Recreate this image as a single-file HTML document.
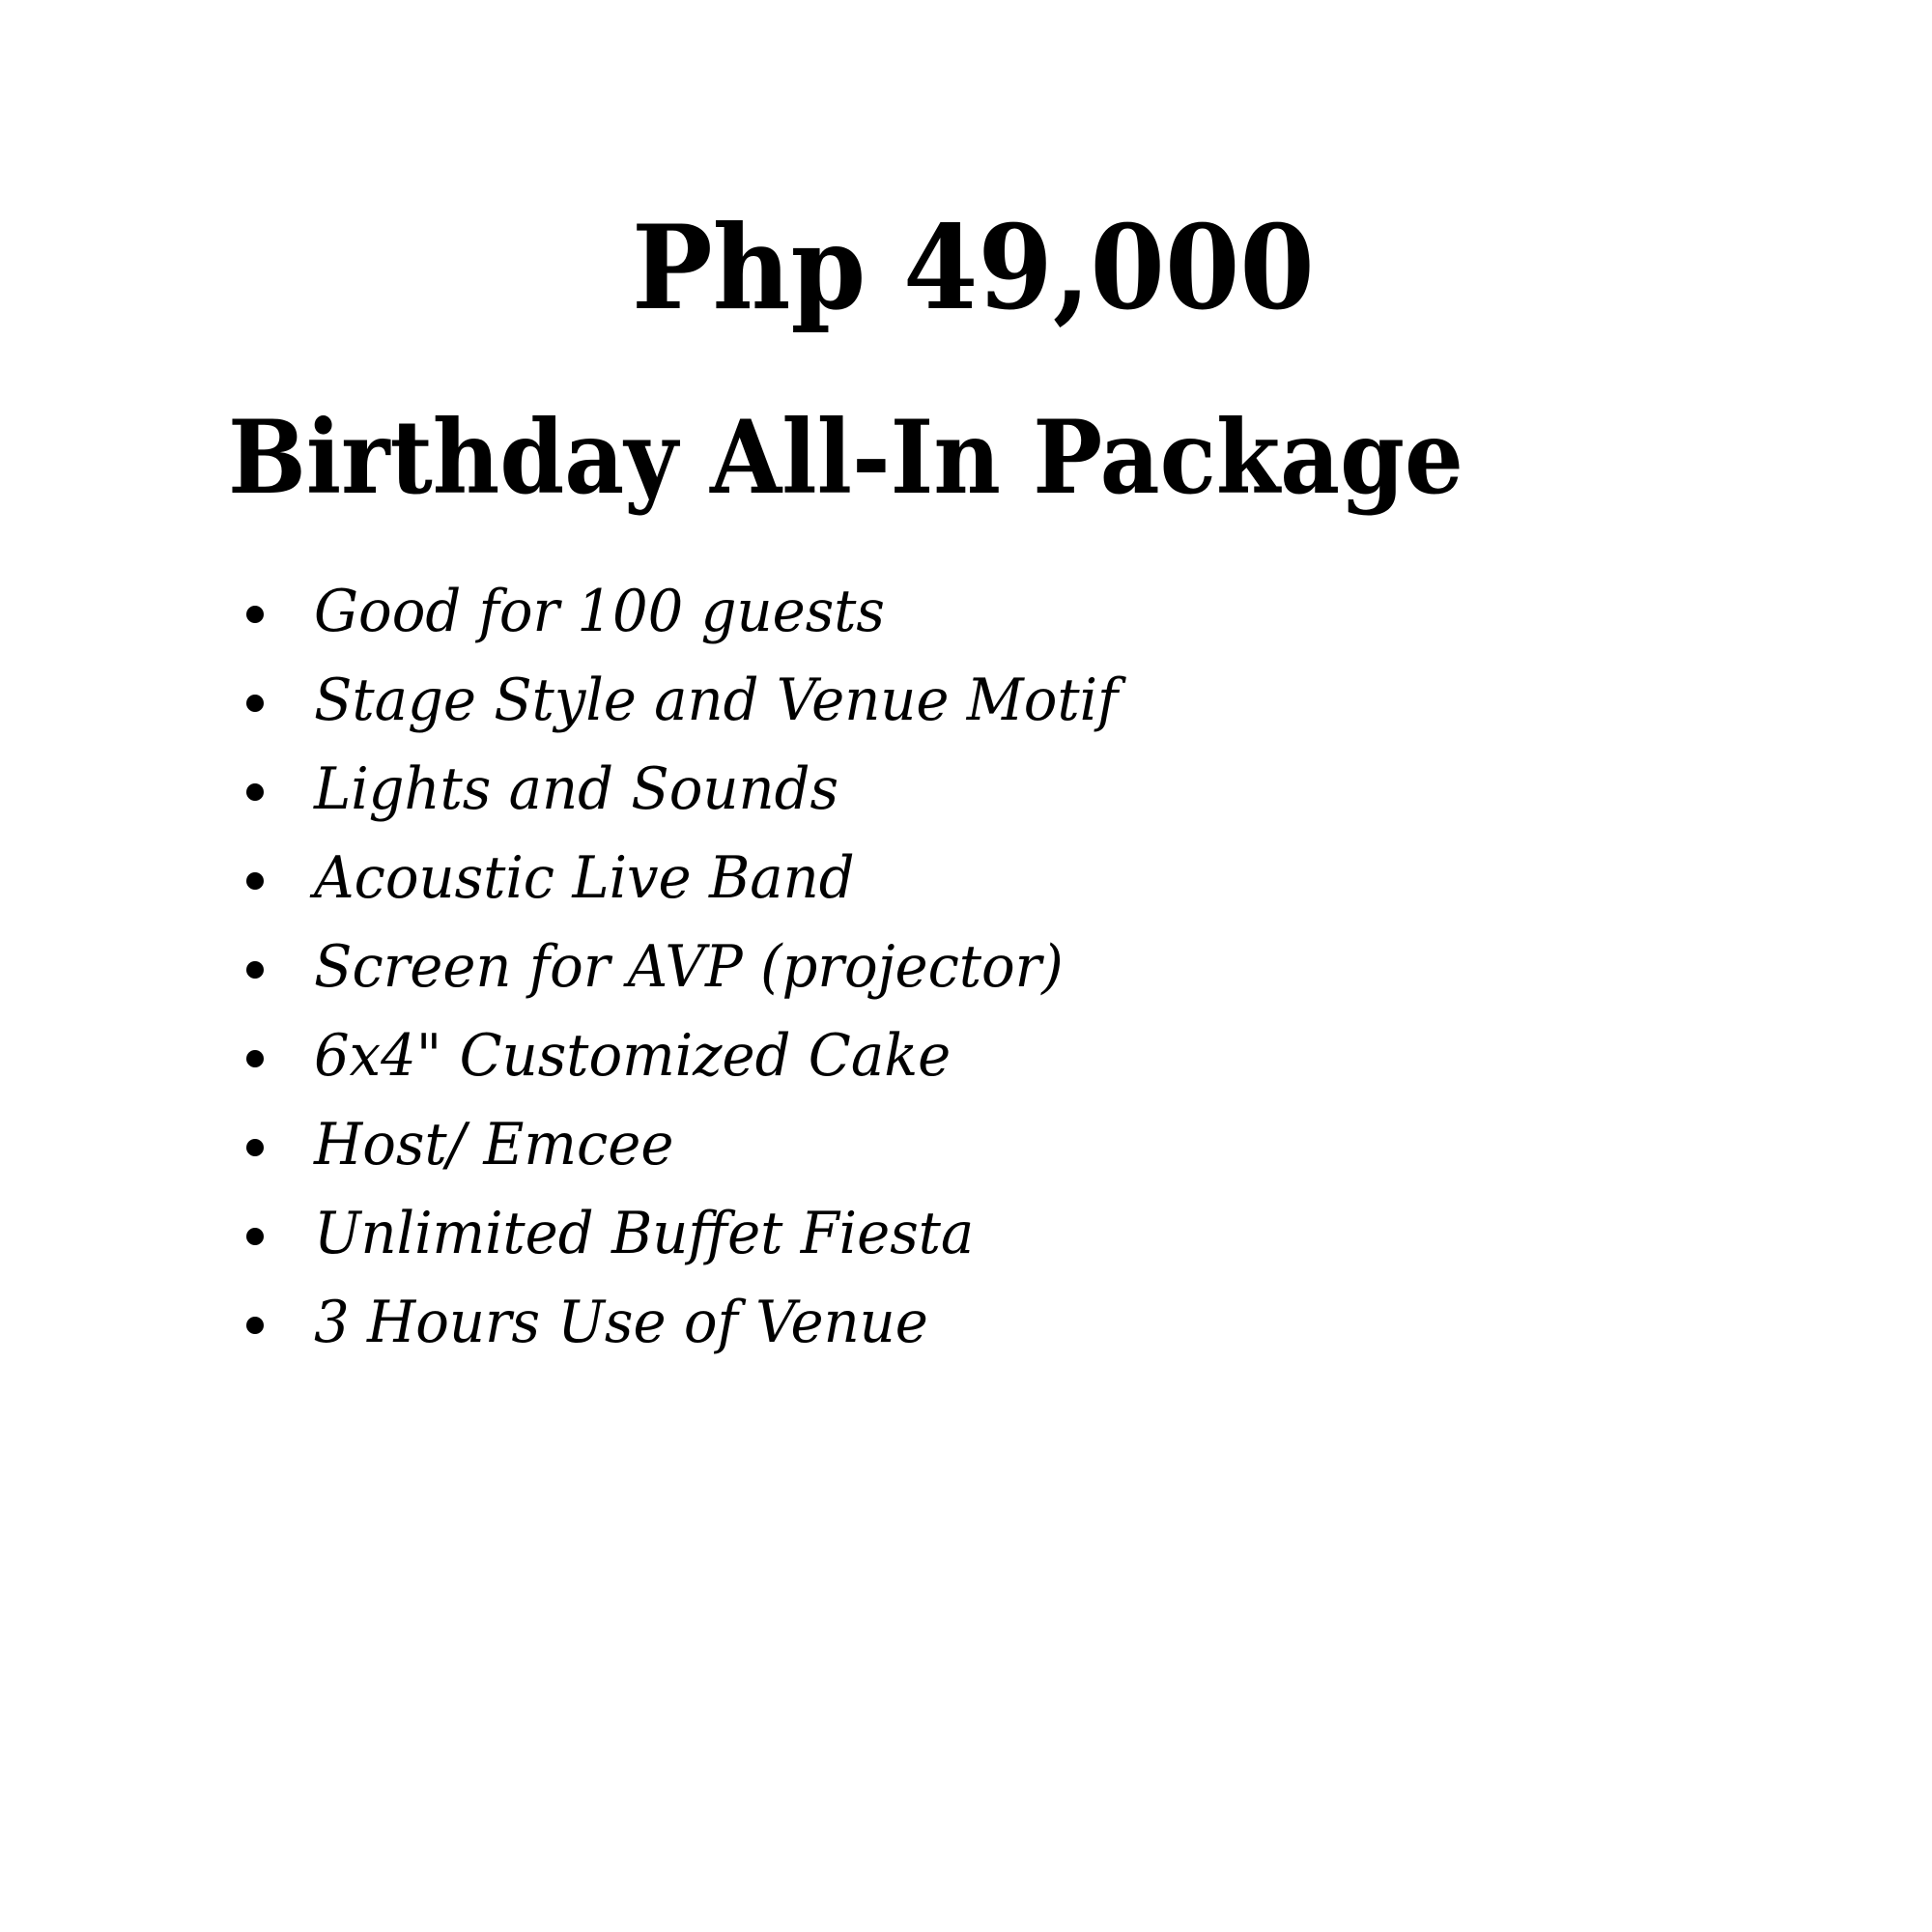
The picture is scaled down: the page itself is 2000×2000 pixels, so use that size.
<!DOCTYPE html>
<html><head><meta charset="utf-8"><style>
html,body{margin:0;padding:0;background:#fff;width:2000px;height:2000px;overflow:hidden}
body{position:relative;font-family:"DejaVu Serif","Liberation Serif",serif;color:#000}
.t{position:absolute;white-space:nowrap;line-height:1;transform-origin:left top}
.h1{left:654px;top:218px;font-size:120px;font-weight:bold;transform:scaleX(0.927)}
.h2{left:236px;top:421px;font-size:105px;font-weight:bold;transform:scaleX(0.911)}
ul{position:absolute;left:0;top:603px;margin:0;padding:0;list-style:none}
li{position:absolute;left:325px;white-space:nowrap;font-style:italic;font-size:60px;line-height:1}
li span{display:inline-block;transform:scaleX(0.96);transform-origin:left top}
li:before{content:"";position:absolute;left:-70px;top:24px;width:18px;height:18px;border-radius:50%;background:#000}
</style></head><body>
<div class="t h1">Php 49,000</div>
<div class="t h2">Birthday All-In Package</div>
<ul>
<li style="top:0"><span>Good for 100 guests</span></li>
<li style="top:92px"><span>Stage Style and Venue Motif</span></li>
<li style="top:184px"><span>Lights and Sounds</span></li>
<li style="top:276px"><span>Acoustic Live Band</span></li>
<li style="top:368px"><span>Screen for AVP (projector)</span></li>
<li style="top:460px"><span>6x4" Customized Cake</span></li>
<li style="top:552px"><span>Host/ Emcee</span></li>
<li style="top:644px"><span>Unlimited Buffet Fiesta</span></li>
<li style="top:736px"><span>3 Hours Use of Venue</span></li>
</ul>
</body></html>
